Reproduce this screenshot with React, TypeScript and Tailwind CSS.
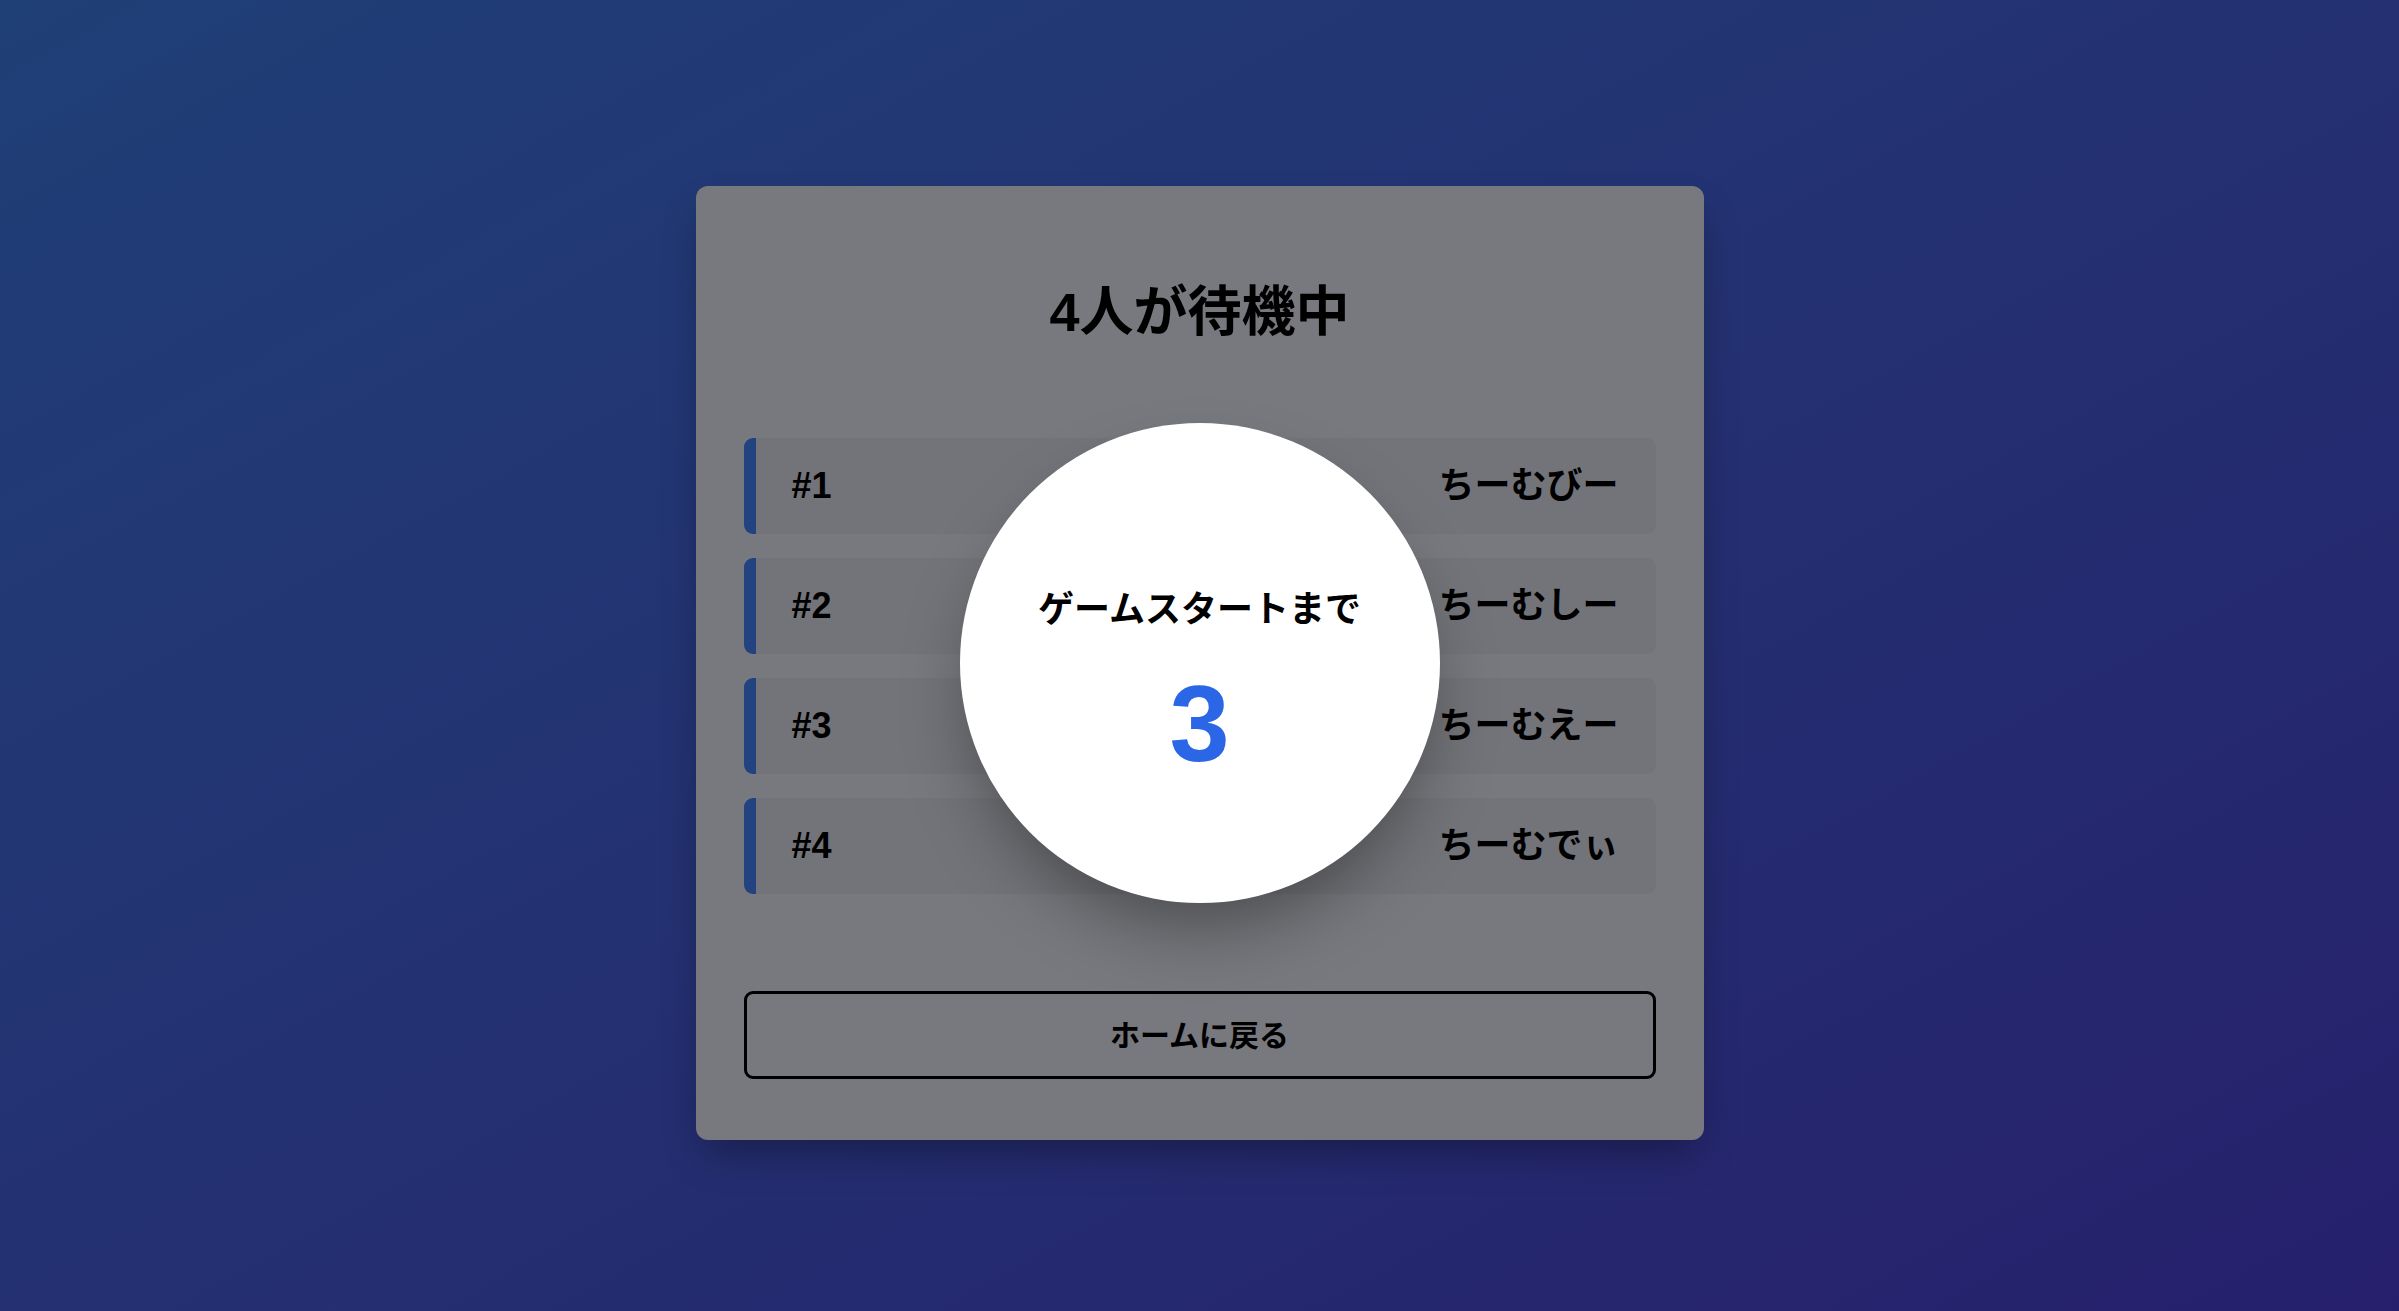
import React from "react";

const players = [
  { id: 1, name: "ちーむびー" },
  { id: 2, name: "ちーむしー" },
  { id: 3, name: "ちーむえー" },
  { id: 4, name: "ちーむでぃ" },
];

export default function App() {
  return (
    <div
      className="min-h-screen w-full bg-gradient-to-br from-[#1f3f77] to-[#26206c] flex justify-center pt-[186px] pb-[171px]"
      style={{ fontFamily: '"Liberation Sans", "Noto Sans CJK JP", sans-serif' }}
    >
      <div className="relative w-[1008px] rounded-[12px] bg-[#78797e] shadow-[0_20px_40px_-10px_rgba(0,0,0,0.35)] px-[48px] pt-[96px] pb-[61px] flex flex-col">
        <h1 className="text-center text-[54px] leading-[60px] font-bold text-black">
          4人が待機中
        </h1>
        <div className="mt-[96px] flex flex-col gap-[24px]">
          {players.map((p) => (
            <div
              key={p.id}
              className="h-[96px] rounded-[9px] bg-[#737479] border-l-[12px] border-[#224380] flex items-center justify-between pl-[36px] pr-[37px]"
            >
              <span className="text-[36px] font-bold text-black">#{p.id}</span>
              <span className="text-[36px] font-bold text-black">{p.name}</span>
            </div>
          ))}
        </div>
        <button className="mt-[97px] h-[88px] w-full rounded-[9px] border-[3px] border-black text-[30px] font-bold text-black">
          ホームに戻る
        </button>

        <div className="absolute inset-0 m-auto w-[480px] h-[480px] rounded-full bg-white shadow-[0_37px_75px_-18px_rgba(0,0,0,0.4)] flex flex-col items-center pt-[160px]">
          <div className="text-[36px] leading-[54px] font-bold text-black">ゲームスタートまで</div>
          <div className="mt-[33px] text-[108px] leading-[108px] font-bold text-[#2b66e6]">3</div>
        </div>
      </div>
    </div>
  );
}
